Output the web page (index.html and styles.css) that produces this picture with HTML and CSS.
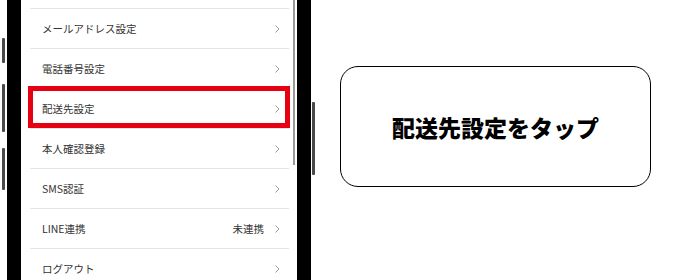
FILE: index.html
```html
<!DOCTYPE html>
<html lang="ja">
<head>
<meta charset="utf-8">
<link rel="stylesheet" href="styles.css">
</head>
<body>
<div class="phone">
  <span class="btn btn-a"></span>
  <span class="btn btn-b"></span>
  <span class="btn btn-c"></span>
  <span class="btn btn-r"></span>
  <div class="bezel">
    <div class="screen">
      <ul class="list">
        <li class="row row-top"></li>
        <li class="row"><span class="label">メールアドレス設定</span><svg class="chev" width="5" height="8" viewBox="0 0 5 8"><polyline points="0.5,0.5 4,4 0.5,7.5" fill="none" stroke="#9a9a9a" stroke-width="1"/></svg></li>
        <li class="row"><span class="label">電話番号設定</span><svg class="chev" width="5" height="8" viewBox="0 0 5 8"><polyline points="0.5,0.5 4,4 0.5,7.5" fill="none" stroke="#9a9a9a" stroke-width="1"/></svg></li>
        <li class="row row-hl"><span class="label">配送先設定</span><svg class="chev" width="5" height="8" viewBox="0 0 5 8"><polyline points="0.5,0.5 4,4 0.5,7.5" fill="none" stroke="#9a9a9a" stroke-width="1"/></svg></li>
        <li class="row"><span class="label">本人確認登録</span><svg class="chev" width="5" height="8" viewBox="0 0 5 8"><polyline points="0.5,0.5 4,4 0.5,7.5" fill="none" stroke="#9a9a9a" stroke-width="1"/></svg></li>
        <li class="row"><span class="label">SMS認証</span><svg class="chev" width="5" height="8" viewBox="0 0 5 8"><polyline points="0.5,0.5 4,4 0.5,7.5" fill="none" stroke="#9a9a9a" stroke-width="1"/></svg></li>
        <li class="row"><span class="label">LINE連携</span><span class="value">未連携</span><svg class="chev" width="5" height="8" viewBox="0 0 5 8"><polyline points="0.5,0.5 4,4 0.5,7.5" fill="none" stroke="#9a9a9a" stroke-width="1"/></svg></li>
        <li class="row"><span class="label">ログアウト</span><svg class="chev" width="5" height="8" viewBox="0 0 5 8"><polyline points="0.5,0.5 4,4 0.5,7.5" fill="none" stroke="#9a9a9a" stroke-width="1"/></svg></li>
      </ul>
      <span class="scrollbar"></span>
    </div>
  </div>
</div>
<div class="callout">配送先設定をタップ</div>
</body>
</html>
```

FILE: styles.css
```css
html, body {
  margin: 0;
  padding: 0;
  background: #fff;
}
body {
  width: 680px;
  height: 280px;
  overflow: hidden;
  display: flex;
  align-items: flex-start;
  font-family: "Noto Sans CJK JP", "Noto Sans", sans-serif;
}
.phone {
  position: relative;
  width: 315px;
  height: 280px;
  flex: none;
}
.btn {
  position: absolute;
  width: 3px;
  background: #4a4a4a;
  border-radius: 1px;
}
.btn-a { left: 2px; top: 38px; height: 25px; }
.btn-b { left: 2px; top: 84px; height: 48px; }
.btn-c { left: 2px; top: 148px; height: 42px; }
.btn-r { left: 312px; top: 102px; height: 73px; }
.bezel {
  margin-left: 7px;
  width: 276px;
  height: 280px;
  border-left: 14px solid #000;
  border-right: 14px solid #000;
  box-shadow: inset 1px 0 0 #555, inset -1px 0 0 #555;
}
.screen {
  position: relative;
  width: 100%;
  height: 100%;
  overflow: hidden;
  background: #fff;
}
.list {
  list-style: none;
  margin: 0;
  padding: 0 8px 0 9px;
}
.row {
  position: relative;
  display: flex;
  align-items: center;
  height: 39px;
  border-bottom: 1px solid #e4e4e4;
  padding: 0 9px 0 12px;
  font-size: 10.5px;
  color: #333;
}
.row-top {
  height: 8px;
}
.label {
  flex: 1;
}
.value {
  margin-right: 11px;
}
.chev {
  flex: none;
  display: block;
}
.row-hl::after {
  content: "";
  position: absolute;
  left: -2px;
  top: -3px;
  width: 252px;
  height: 32px;
  border: 5px solid #e60012;
}
.scrollbar {
  position: absolute;
  left: 272px;
  top: 0;
  width: 2px;
  height: 165px;
  background: #9a9a9a;
}
.callout {
  flex: none;
  margin-left: 25px;
  margin-top: 66px;
  width: 309px;
  height: 119px;
  border: 1px solid #000;
  border-radius: 18px;
  display: flex;
  align-items: center;
  justify-content: center;
  font-size: 23px;
  font-weight: 900;
  color: #000;
}
```
